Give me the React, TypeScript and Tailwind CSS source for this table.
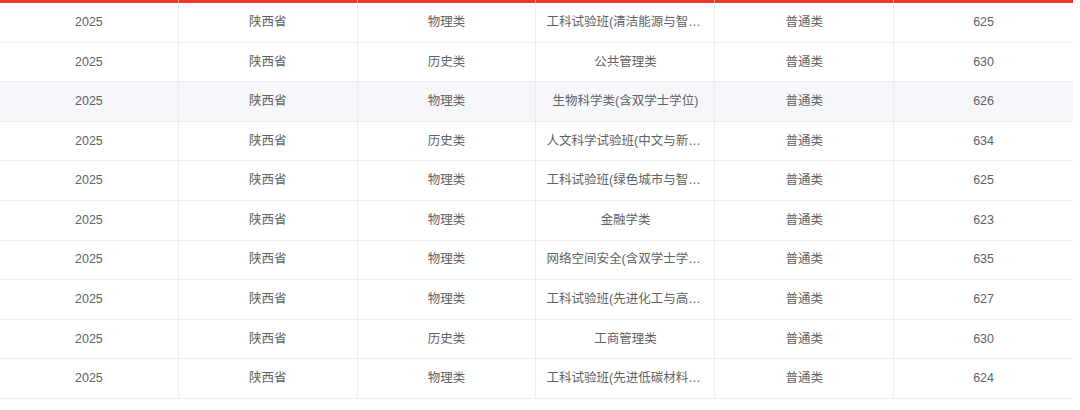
import React from 'react';

const ROWS = [
  ['2025', '陕西省', '物理类', '工科试验班(清洁能源与智能电网)', '普通类', '625'],
  ['2025', '陕西省', '历史类', '公共管理类', '普通类', '630'],
  ['2025', '陕西省', '物理类', '生物科学类(含双学士学位)', '普通类', '626'],
  ['2025', '陕西省', '历史类', '人文科学试验班(中文与新闻传播)', '普通类', '634'],
  ['2025', '陕西省', '物理类', '工科试验班(绿色城市与智能建造)', '普通类', '625'],
  ['2025', '陕西省', '物理类', '金融学类', '普通类', '623'],
  ['2025', '陕西省', '物理类', '网络空间安全(含双学士学位)', '普通类', '635'],
  ['2025', '陕西省', '物理类', '工科试验班(先进化工与高分子材料)', '普通类', '627'],
  ['2025', '陕西省', '历史类', '工商管理类', '普通类', '630'],
  ['2025', '陕西省', '物理类', '工科试验班(先进低碳材料与冶金)', '普通类', '624'],
];

export default function App() {
  return (
    <div className="w-[1080px] h-[410px] bg-white overflow-hidden" style={{ fontFamily: '"Liberation Sans", "Noto Sans CJK SC", sans-serif' }}>
      <div className="w-[1073px]">
        {/* header edge */}
        <div className="grid grid-cols-6 h-[3px]">
          {[0, 1, 2, 3, 4, 5].map((i) => (
            <div key={i} className={`bg-[#f2352b] ${i < 5 ? 'border-r border-[#f7a09a]' : ''}`} />
          ))}
        </div>

        {ROWS.map((row, r) => (
          <div
            key={r}
            className={`grid grid-cols-6 h-[39.6px] border-b border-[#ebeef5] ${r === 2 ? 'bg-[#f5f7fa]' : 'bg-white'}`}
          >
            {row.map((cell, c) => (
              <div
                key={c}
                className={`flex items-center justify-center px-[10px] min-w-0 ${c < 5 ? 'border-r border-[#ebeef5]' : ''}`}
              >
                <span className="block truncate text-[12.5px] text-[#606266]">{cell}</span>
              </div>
            ))}
          </div>
        ))}
      </div>
    </div>
  );
}
